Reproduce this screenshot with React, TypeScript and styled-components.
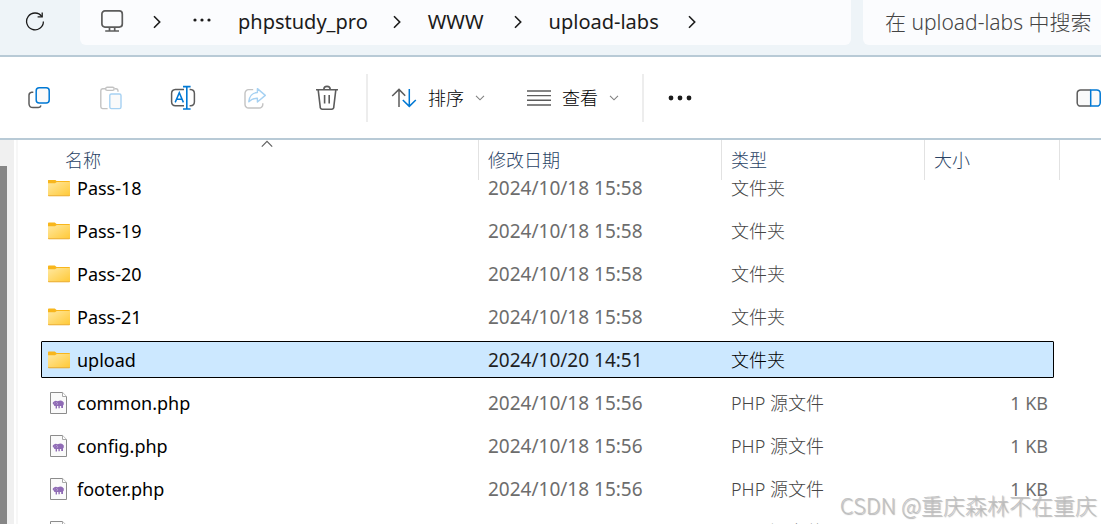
import React from "react";
import styled, { createGlobalStyle, css } from "styled-components";

const Global = createGlobalStyle`
  * { box-sizing: border-box; }
  html, body { height: 100%; }
  #root { height: 100%; }
  body {
    margin: 0;
    overflow: hidden;
    background: #fff;
    color: #1b1b1b;
    font-family: "Noto Sans", "Noto Sans CJK SC", sans-serif;
  }
  button, input { font-family: inherit; color: inherit; }
`;

const Window = styled.div`
  position: relative;
  height: 100%;
  display: flex;
  flex-direction: column;
  overflow: hidden;
`;

const TopBar = styled.header`
  display: flex;
  flex: none;
  height: 57px;
  padding-bottom: 10px;
  background: #eef4f8;
  border-bottom: 2px solid #b8cad6;
`;

const IconButton = styled.button`
  display: flex;
  flex: none;
  align-items: center;
  justify-content: center;
  width: 72px;
  height: 48px;
  padding: 0;
  border: 0;
  background: transparent;

  svg { display: block; }
`;

const RefreshButton = styled(IconButton)`
  width: 70px;
  height: 42px;
  margin-right: 10px;
`;

const AddressBar = styled.nav`
  display: flex;
  flex: 1;
  align-items: center;
  min-width: 0;
  height: 45px;
  padding: 0 0 2px 20px;
  border-radius: 0 0 6px 6px;
  background: #fbfcfe;
`;

const Crumb = styled.a`
  color: #1b1b1b;
  font-size: 20px;
  line-height: 28px;
  text-decoration: none;
  white-space: nowrap;

  svg { display: block; }
`;

const CrumbArrow = styled.span<{ $before: number; $after: number }>`
  margin: 0 ${(p) => p.$after}px 0 ${(p) => p.$before}px;

  svg { display: block; }
`;

const SearchBox = styled.input`
  flex: none;
  width: 238px;
  height: 45px;
  margin-left: 12px;
  padding: 0 0 2px 22px;
  border: 0;
  border-radius: 0 0 0 6px;
  outline: 0;
  background: #fbfcfe;
  font-size: 21px;
  font-weight: 300;

  &::placeholder { color: #444; opacity: 1; }
`;

const Toolbar = styled.div`
  display: flex;
  flex: none;
  align-items: center;
  height: 83px;
  padding-left: 3px;
  border-bottom: 2px solid #b8cad6;
  background: #fff;
`;

const Divider = styled.span<{ $gap: number }>`
  flex: none;
  width: 2px;
  height: 48px;
  margin-left: ${(p) => p.$gap}px;
  background: #ededed;
`;

const MenuButton = styled.button<{ $indent: number }>`
  display: flex;
  flex: none;
  align-items: center;
  gap: 11px;
  height: 48px;
  margin-left: ${(p) => p.$indent}px;
  padding: 0;
  border: 0;
  background: transparent;
  color: #000;
  font-size: 18px;
  font-weight: 300;
  line-height: 24px;
`;

const PaneToggle = styled(IconButton)`
  width: 25px;
  margin-left: auto;
`;

const Body = styled.div`
  display: flex;
  flex: 1;
  min-height: 0;
`;

const ScrollTrack = styled.div`
  flex: none;
  width: 14px;
  padding-top: 26px;
  background: #f0f0f0;
`;

const ScrollThumb = styled.div`
  width: 7px;
  height: 100%;
  background: #868686;
`;

const PaneEdge = styled.div`
  flex: none;
  width: 4px;
  border-right: 2px solid #f7f7f7;
`;

const FileTable = styled.table`
  display: block;
  flex: 1;
  min-width: 0;
  overflow: hidden;
`;

const columns = css`
  display: grid;
  grid-template-columns: minmax(0, 1fr) 243px 203px 135px;
`;

const Head = styled.thead`
  position: relative;
  z-index: 1;
  display: block;
  padding-right: 41px;
  background: #fff;
`;

const HeadRow = styled.tr`
  ${columns}
`;

const HeadCell = styled.th<{ $indent?: number }>`
  position: relative;
  height: 40px;
  padding: 8px 0 0 ${(p) => p.$indent ?? 9}px;
  border-right: 1px solid #e2e2e2;
  color: #2a4365;
  font-size: 18px;
  font-weight: 300;
  line-height: 24px;
  text-align: left;
`;

const SortMark = styled.svg`
  position: absolute;
  top: 0;
  left: 50%;
  margin-left: 13px;
`;

/* The list is scrolled part of a row under the header. */
const Rows = styled.tbody`
  display: block;
  margin-top: -11px;
  padding: 0 47px 0 23px;
`;

const Row = styled.tr<{ $selected?: boolean }>`
  ${columns}
  grid-template-columns: minmax(0, 1fr) 243px 203px 128px;
  align-items: center;
  height: 37px;
  margin-bottom: 6px;
  border: 1px solid ${(p) => (p.$selected ? "#000" : "transparent")};
  border-radius: 1px;
  background: ${(p) => (p.$selected ? "#cce8ff" : "transparent")};
  color: ${(p) => (p.$selected ? "#1f1f1f" : "#6d6d6d")};
`;

const Cell = styled.td`
  padding: 0 0 0 9px;
  font-size: 18px;
  line-height: 24px;
  white-space: nowrap;
`;

const DateCell = styled(Cell)`
  font-size: 19px;
`;

const TypeCell = styled(Cell)<{ $selected?: boolean }>`
  color: ${(p) => (p.$selected ? "#000" : "#454545")};
  font-weight: 300;
`;

const SizeCell = styled(Cell)`
  padding: 0 5px 0 0;
  text-align: right;
`;

const NameCell = styled(Cell)`
  display: flex;
  align-items: center;
  gap: 6px;
  padding-left: 5px;
  color: #000;

  svg { display: block; flex: none; }
`;

const Watermark = styled.div`
  position: absolute;
  right: 4px;
  bottom: 4px;
  color: rgba(190, 190, 190, 0.9);
  font-family: "Noto Sans CJK SC", sans-serif;
  font-size: 22px;
  font-weight: 300;
  line-height: 32px;
  text-shadow: 1px 1px 1px rgba(110, 110, 110, 0.5);
  z-index: 2;
`;

const INK = "#5c5c5c";
const BLUE = "#0078d4";

const RefreshIcon = () => (
  <svg width="20" height="20" viewBox="0 0 20 20" fill="none" stroke="#1b1b1b" strokeWidth="1.3">
    <path d="M16.9 5.6A8.4 8.4 0 1 0 18.4 10.4" />
    <path d="M17.2 1.4V5.8H12.6" />
  </svg>
);

const ComputerIcon = () => (
  <svg width="24" height="24" viewBox="0 0 24 24" fill="none" stroke={INK} strokeWidth="1.7">
    <rect x="1.9" y=".9" width="20.4" height="16.2" rx="3" />
    <path d="M9.5 17.2V20.8M14.7 17.2V20.8M5.2 21H19" />
  </svg>
);

const ChevronRight = () => (
  <svg width="8" height="14" viewBox="0 0 8 14" fill="none" stroke="#1b1b1b" strokeWidth="1.6">
    <path d="M1 1.3 6.7 7 1 12.7" />
  </svg>
);

const Dots = ({ width, height, r, gap }: { width: number; height: number; r: number; gap: number }) => (
  <svg width={width} height={height} viewBox={`0 0 ${width} ${height}`} fill="#1b1b1b">
    <circle cx={width / 2 - gap} cy="4" r={r} />
    <circle cx={width / 2} cy="4" r={r} />
    <circle cx={width / 2 + gap} cy="4" r={r} />
  </svg>
);

const ChevronDown = () => (
  <svg width="10" height="6" viewBox="0 0 10 6" fill="none" stroke="#808080" strokeWidth="1.1">
    <path d="M1 .8 5 4.8 9 .8" />
  </svg>
);

const CopyIcon = () => (
  <svg width="24" height="24" viewBox="0 0 24 24" fill="none" strokeWidth="1.5">
    <path d="M6.3 6.2H4.6A3 3 0 0 0 2 9.2V18A4 4 0 0 0 6 21.6H11A3 3 0 0 0 14 19.6" stroke={INK} />
    <rect x="9.2" y="1.7" width="13" height="15.2" rx="3" stroke={BLUE} fill="#fafafa" />
  </svg>
);

const PasteIcon = () => (
  <svg width="24" height="24" viewBox="0 0 24 24" fill="none" strokeWidth="1.4">
    <path d="M6.8 2.8H3.6A2 2 0 0 0 1.8 4.8V20.6A2 2 0 0 0 3.6 22.6H8.6M15.8 2.8H17.2A2 2 0 0 1 19 4.8V5.8" stroke="#c3c3c3" />
    <rect x="6.6" y="1.2" width="8.6" height="3.2" rx="1.6" stroke="#c3c3c3" />
    <rect x="10.8" y="8" width="11.2" height="14.6" rx="1.6" stroke="#a6d1f2" fill="#fafafa" />
  </svg>
);

const RenameIcon = () => (
  <svg width="26" height="26" viewBox="0 0 26 26" fill="none" strokeWidth="1.5">
    <path d="M14 4.6H5.4A4 4 0 0 0 1.6 8.6V17A4 4 0 0 0 5.4 20.8H14M19.6 4.6H20.6A4 4 0 0 1 24.4 8.6V17A4 4 0 0 1 20.6 20.8H19.6" stroke={INK} />
    <path d="M5.2 17.4 9.3 7.6 13.4 17.4M6.6 14.2H12" stroke={BLUE} />
    <path d="M16.8 1.8V23.8M13 1.6H20.6M13 24H20.6" stroke={BLUE} strokeWidth="1.6" />
  </svg>
);

const ShareIcon = () => (
  <svg width="24" height="24" viewBox="0 0 24 24" fill="none" strokeWidth="1.4" strokeLinejoin="round">
    <path d="M10.2 3.6H5.6A3.6 3.6 0 0 0 2 7.2V18.4A3.6 3.6 0 0 0 5.6 22H16.2A3.6 3.6 0 0 0 19.8 18.4V17.2" stroke="#c3c3c3" />
    <path d="M14.4 2.6 22.3 9.4 14.4 16V12.3C10.8 12.2 8.2 13.2 5.8 15.8C6.2 10.6 9.4 6.8 14.4 6.5Z" stroke="#a6d1f2" />
  </svg>
);

const TrashIcon = () => (
  <svg width="24" height="26" viewBox="0 0 24 26" fill="none" stroke={INK} strokeWidth="1.6">
    <path d="M1 4.8H23M8.8 4.6A3.2 3.2 0 0 1 15.2 4.6M3.2 5 5.2 21.6A2.2 2.2 0 0 0 7.4 24.2H16.6A2.2 2.2 0 0 0 18.8 21.6L20.8 5M9.6 10V18.4M14.2 10V18.4" />
  </svg>
);

const SortIcon = () => (
  <svg width="26" height="20" viewBox="0 0 26 20" fill="none" strokeWidth="1.5">
    <path d="M8 19V1.4M1.2 8 8 1.4 14.2 7.8" stroke={INK} />
    <path d="M18.3 1V18.4M11.8 12 18.3 18.4 24.8 12" stroke={BLUE} />
  </svg>
);

const ViewIcon = () => (
  <svg width="24" height="18" viewBox="0 0 24 18" stroke={INK} strokeWidth="1.4">
    <path d="M0 2H24M0 6.6H24M0 11.3H24M0 16H24" />
  </svg>
);

const PaneIcon = () => (
  <svg width="25" height="18" viewBox="0 0 25 18" fill="#fafafa" strokeWidth="1.5">
    <path d="M14.5.9H4.6A3.4 3.4 0 0 0 1.2 4.3V13.7A3.4 3.4 0 0 0 4.6 17.1H14.5" stroke={INK} />
    <path d="M14.7.9H20.8A3.4 3.4 0 0 1 24.2 4.3V13.7A3.4 3.4 0 0 1 20.8 17.1H14.7Z" stroke={BLUE} />
  </svg>
);

const FolderIcon = () => (
  <svg width="24" height="20" viewBox="0 0 24 20">
    <defs>
      <linearGradient id="folder" x1="0" y1="0" x2="1" y2="1">
        <stop offset="0" stopColor="#ffe8a0" />
        <stop offset="1" stopColor="#ffc937" />
      </linearGradient>
    </defs>
    <path d="M1 2.4Q1 1.6 1.8 1.6H7.8L9.6 3H22.2Q23 3 23 3.8V9H1Z" fill="#f8b61c" />
    <path d="M1 5.2H8L9.8 4H23V17.6H1Z" fill="url(#folder)" />
    <path d="M1 17.2H23V17.4Q23 18.2 22.2 18.2H1.8Q1 18.2 1 17.4Z" fill="#eba81f" />
  </svg>
);

const PhpIcon = () => (
  <svg width="24" height="24" viewBox="0 0 24 24">
    <path d="M3.5 1.5H15.6L19.5 5.4V22.5H3.5Z" fill="#fafafa" stroke="#8c8c8c" />
    <path d="M15.5 1.5V5.5H19.5" fill="#fff" stroke="#a8a8a8" />
    <path d="M7 10.4Q8.6 9.2 10.6 10.2Q14 9 15.6 10.2Q17.4 11 16.8 13.4L16 14.4V17H14.2V15H12.8V17.2H11.4V15H10V17.6H8.6V15L7 14.8V13.8L5.8 13V11.6Z" fill="#8f6bb5" />
    <path d="M9.2 11.2 10.6 12.4 10 13.8M7.4 12.2H8.2" stroke="#c9b6dd" strokeWidth=".7" fill="none" />
  </svg>
);

type Entry = { name: string; date: string; type: string; size: string; selected?: boolean };

const folder = (name: string, date = "2024/10/18 15:58", selected = false): Entry => ({
  name, date, type: "文件夹", size: "", selected,
});
const php = (name: string): Entry => ({
  name, date: "2024/10/18 15:56", type: "PHP 源文件", size: "1 KB",
});

const entries: Entry[] = [
  folder("Pass-18"),
  folder("Pass-19"),
  folder("Pass-20"),
  folder("Pass-21"),
  folder("upload", "2024/10/20 14:51", true),
  php("common.php"),
  php("config.php"),
  php("footer.php"),
  php("head.php"),
];

export default function App() {
  return (
    <Window>
      <Global />
      <TopBar>
        <RefreshButton aria-label="刷新"><RefreshIcon /></RefreshButton>
        <AddressBar aria-label="地址栏">
          <Crumb href="#pc" aria-label="此电脑"><ComputerIcon /></Crumb>
          <CrumbArrow $before={29} $after={31}><ChevronRight /></CrumbArrow>
          <Crumb href="#more" aria-label="更多"><Dots width={20} height={12} r={1.6} gap={7} /></Crumb>
          <CrumbArrow $before={0} $after={26} />
          <Crumb href="#phpstudy_pro">phpstudy_pro</Crumb>
          <CrumbArrow $before={25} $after={27}><ChevronRight /></CrumbArrow>
          <Crumb href="#www">WWW</Crumb>
          <CrumbArrow $before={30} $after={27}><ChevronRight /></CrumbArrow>
          <Crumb href="#upload-labs">upload-labs</Crumb>
          <CrumbArrow $before={29} $after={27}><ChevronRight /></CrumbArrow>
        </AddressBar>
        <SearchBox type="text" aria-label="搜索" placeholder="在 upload-labs 中搜索" />
      </TopBar>

      <Toolbar role="toolbar">
        <IconButton aria-label="复制"><CopyIcon /></IconButton>
        <IconButton aria-label="粘贴"><PasteIcon /></IconButton>
        <IconButton aria-label="重命名"><RenameIcon /></IconButton>
        <IconButton aria-label="共享"><ShareIcon /></IconButton>
        <IconButton aria-label="删除"><TrashIcon /></IconButton>
        <Divider $gap={3} />
        <MenuButton $indent={23}><SortIcon />排序<ChevronDown /></MenuButton>
        <MenuButton $indent={42}><ViewIcon />查看<ChevronDown /></MenuButton>
        <Divider $gap={23} />
        <IconButton aria-label="查看更多"><Dots width={26} height={8} r={2.4} gap={9} /></IconButton>
        <PaneToggle aria-label="预览窗格"><PaneIcon /></PaneToggle>
      </Toolbar>

      <Body>
        <ScrollTrack><ScrollThumb /></ScrollTrack>
        <PaneEdge />
        <FileTable>
          <Head>
            <HeadRow>
              <HeadCell $indent={47}>
                名称
                <SortMark width="12" height="8" viewBox="0 0 12 8" fill="none" stroke="#606060" strokeWidth="1.2">
                  <path d="M.8 6.6 6 1.4 11.2 6.6" />
                </SortMark>
              </HeadCell>
              <HeadCell>修改日期</HeadCell>
              <HeadCell>类型</HeadCell>
              <HeadCell>大小</HeadCell>
            </HeadRow>
          </Head>
          <Rows>
            {entries.map((e) => (
              <Row key={e.name} $selected={e.selected}>
                <NameCell>
                  {e.size ? <PhpIcon /> : <FolderIcon />}
                  {e.name}
                </NameCell>
                <DateCell>{e.date}</DateCell>
                <TypeCell $selected={e.selected}>{e.type}</TypeCell>
                <SizeCell>{e.size}</SizeCell>
              </Row>
            ))}
          </Rows>
        </FileTable>
      </Body>
      <Watermark>CSDN @重庆森林不在重庆</Watermark>
    </Window>
  );
}
